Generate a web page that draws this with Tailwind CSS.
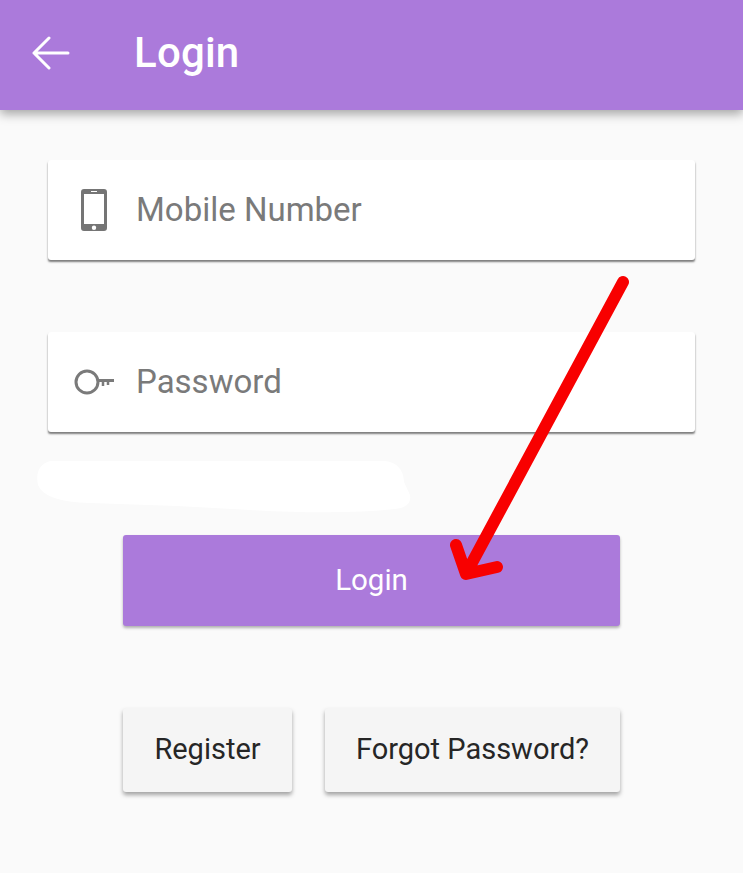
<!DOCTYPE html>
<html lang="en">
<head>
    <meta charset="UTF-8">
    <meta name="viewport" content="width=device-width, initial-scale=1.0">
    <title>Login</title>
    <script src="https://cdn.jsdelivr.net/npm/@tailwindcss/browser@4"></script>
</head>
<body class="bg-[#fafafa] font-['Roboto',sans-serif]">
<div class="relative w-[743px] h-[873px] overflow-hidden">

    <!-- App bar -->
    <header class="flex items-center h-[110px] pb-[5px] bg-[#ab7adb] shadow-[0_4px_10px_rgba(0,0,0,0.35)] text-white">
        <svg class="w-[38px] h-[34px] ml-[32px]" viewBox="0 0 38 34" fill="none" stroke="#fff" stroke-width="3" stroke-linecap="round" stroke-linejoin="round">
            <path d="M36 17H2M17 2 2 17l15 15"/>
        </svg>
        <h1 class="ml-[64px] text-[42px] tracking-[0.2px] font-medium leading-none">Login</h1>
    </header>

    <!-- Form -->
    <main class="px-[48px] pt-[50px]">
        <div class="flex items-center h-[100px] bg-white rounded-[3px] shadow-[0_2px_2px_-0.500px_rgba(0,0,0,0.5)]">
            <div class="w-[88px] flex justify-center">
                <svg class="w-[26px] h-[42px] ml-[3px]" viewBox="0 0 26 42">
                    <path fill="#757575" fill-rule="evenodd" d="M3 0h20a3 3 0 0 1 3 3v36a3 3 0 0 1-3 3H3a3 3 0 0 1-3-3V3a3 3 0 0 1 3-3ZM3 5v30h20V5H3Zm7-3v1h6V2h-6Zm3 34.500a2.200 2.200 0 1 0 0 4.400 2.200 2.200 0 0 0 0-4.400Z"/>
                </svg>
            </div>
            <span class="text-[33px] text-[#7a7a7a]">Mobile Number</span>
        </div>

        <div class="flex items-center h-[100px] mt-[72px] bg-white rounded-[3px] shadow-[0_2px_2px_-0.500px_rgba(0,0,0,0.5)]">
            <div class="w-[88px] flex justify-center">
                <svg class="w-[40px] h-[26px] ml-[3px]" viewBox="0 0 40 26" fill="none" stroke="#7a7a7a">
                    <circle cx="13" cy="13" r="11" stroke-width="3"/>
                    <path stroke-width="3" d="M23 11.500h17"/>
                    <path stroke-width="2.500" d="M29 12v5M34 12v4"/>
                </svg>
            </div>
            <span class="text-[33px] text-[#7a7a7a]">Password</span>
        </div>

        <!-- Login button -->
        <button class="block w-[497px] h-[91px] mt-[103px] mx-auto bg-[#ab7adb] rounded-[3px] shadow-[0_2px_3px_rgba(0,0,0,0.3)] text-white text-[29.500px]">Login</button>

        <!-- Secondary buttons -->
        <div class="flex gap-[33px] mt-[82px] ml-[75px]">
            <button class="w-[169px] h-[84px] bg-[#f5f5f5] rounded-[3px] shadow-[0_3px_4px_rgba(0,0,0,0.35)] text-[#262626] text-[29px]">Register</button>
            <button class="w-[295px] h-[84px] bg-[#f5f5f5] rounded-[3px] shadow-[0_3px_4px_rgba(0,0,0,0.35)] text-[#262626] text-[29px]">Forgot Password?</button>
        </div>
    </main>

    <!-- Annotations drawn over the screenshot -->
    <svg class="absolute left-0 top-0 w-[743px] h-[873px] pointer-events-none" viewBox="0 0 743 873" fill="none">
        <path fill="#fff" d="M50 461 385 461Q403 463 404 482L410 495Q412 507 395 509 340 515 250 510 170 505 90 503 45 502 38 485 34 466 50 461Z"/>
        <path stroke="#f80000" stroke-width="12" stroke-linecap="round" stroke-linejoin="round" d="M623 282 467 572M456 545 466 574 497 567"/>
    </svg>
</div>
</body>
</html>
